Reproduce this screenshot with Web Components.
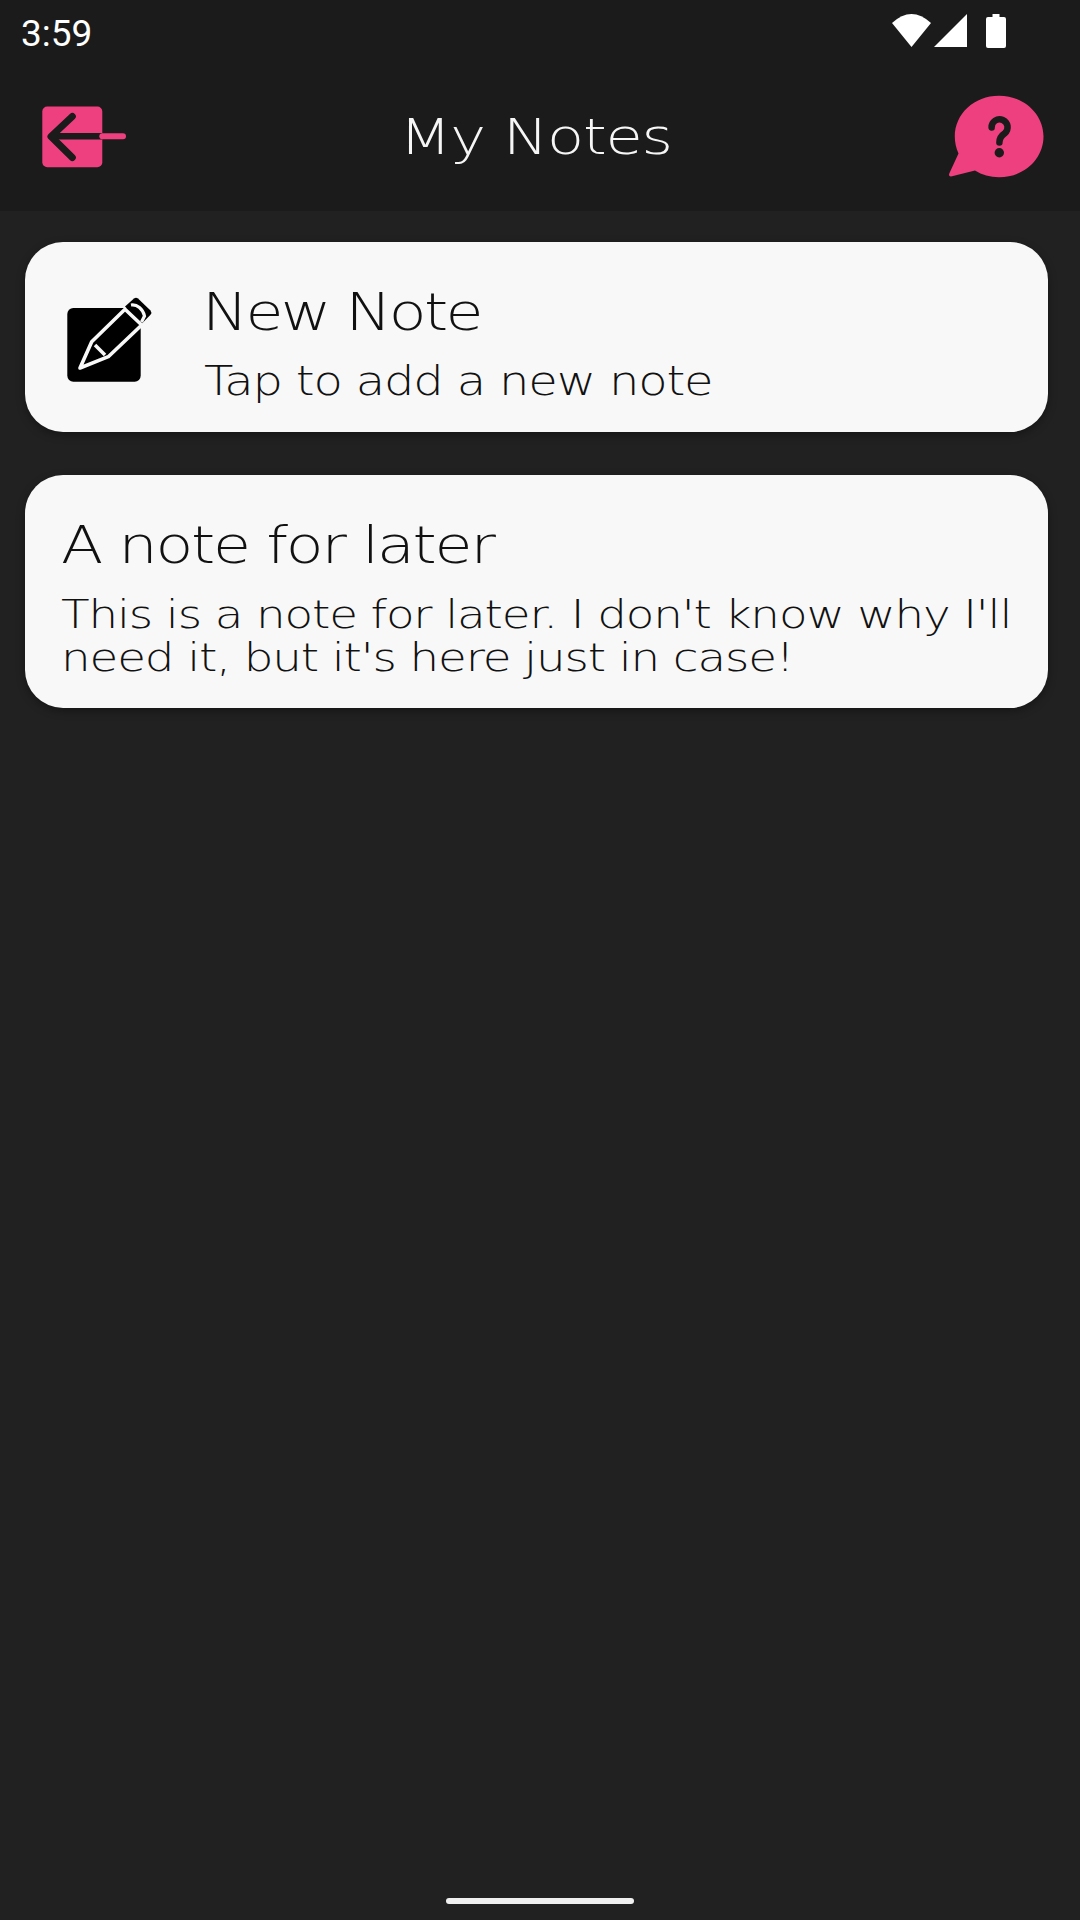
<!doctype html>
<html><head><meta charset="utf-8"><style>
html,body{margin:0;padding:0;height:1920px;background:#212121}
body{display:flex;flex-direction:column;width:1080px;overflow:hidden;font-family:"DejaVu Sans",sans-serif}
</style></head><body>
<notes-app>
  <app-header title-text="My Notes"></app-header>
  <note-list>
    <note-card heading="New Note" kind="new">
      <svg slot="icon" width="88" height="90" viewBox="66 296 88 90" aria-hidden="true">
        <rect x="67.300" y="308" width="73.400" height="73.700" rx="6" fill="#000"/>
        <path d="M125 306.500 L134 298.500 Q136 296.800 138 298.500 L150.500 310.500 Q152.300 312.700 150.500 314.800 L141.500 324Z" fill="#000"/>
        <path d="M91.700 341.700 L125 309.300 L141.700 325 L108.300 356.700 L80 368Z" fill="#000" stroke="#f8f8f8" stroke-width="3.600" stroke-linejoin="round"/>
        <path d="M95 345 L105 355" stroke="#f8f8f8" stroke-width="3.600" fill="none"/>
        <path d="M131 305 C137 304 143 309 144.500 316 L141.500 322" stroke="#f8f8f8" stroke-width="3.200" fill="none"/>
      </svg>
      <span slot="body">Tap to add a new note</span>
    </note-card>
    <note-card heading="A note for later">
      <span slot="body">This is a note for later. I don't know why I'll need it, but it's here just in case!</span>
    </note-card>
  </note-list>
  <home-indicator></home-indicator>
</notes-app>
<script>
customElements.define('notes-app',class extends HTMLElement{constructor(){super();this.attachShadow({mode:'open'}).innerHTML=`<style>:host{display:flex;flex-direction:column;height:1920px;width:1080px}</style><slot></slot>`}});
customElements.define('status-bar',class extends HTMLElement{constructor(){super();this.attachShadow({mode:'open'}).innerHTML=`<style>
:host{display:flex;justify-content:space-between;align-items:flex-start;height:63px;box-sizing:border-box;padding:12px 73px 0 21px;color:#fff}
.t{font:400 37px/44px Roboto,sans-serif}
svg{display:block;margin-top:1px}
</style><span class="t">3:59</span>
<svg width="115" height="36" viewBox="892 13 115 36" aria-hidden="true" fill="#fff">
<path d="M892 23 Q911.500 5 931 23 L911.500 47Z"/>
<path d="M934 47 L967 14 V47Z"/>
<path d="M992.500 14 H999.500 V17 H1004 Q1006 17 1006 19 V46 Q1006 48 1004 48 H988 Q986 48 986 46 V19 Q986 17 988 17 H992.500Z"/>
</svg>`}});
customElements.define('app-header',class extends HTMLElement{constructor(){super();this.attachShadow({mode:'open'}).innerHTML=`<style>
:host{display:block;background:#1b1b1b;height:211px}
.bar{display:grid;grid-template-columns:1fr auto 1fr;align-items:center;height:148px;padding:0 51px 0 42px;box-sizing:border-box}
h1{margin:0;font:200 50.500px/60px "DejaVu Sans",sans-serif;letter-spacing:-1.030px;color:#f6f6f6;white-space:nowrap;transform:scaleX(1.2)}
.r{justify-self:end;margin-right:-15px}svg{display:block}
</style><status-bar></status-bar><div class="bar">
<svg width="85" height="62" viewBox="42 105.500 85 62" aria-hidden="true">
<rect x="42.300" y="106" width="60" height="60.700" rx="5" fill="#ee3f7e"/>
<path d="M51 135.800 H102.300" stroke="#1b1b1b" stroke-width="6.500"/>
<path d="M102.300 135.800 H123" stroke="#ee3f7e" stroke-width="6" stroke-linecap="round"/>
<path d="M72.300 116 L51 136 L72.300 157" stroke="#1b1b1b" stroke-width="7" stroke-linecap="round" stroke-linejoin="round" fill="none"/>
</svg>
<h1></h1>
<svg class="r" width="96" height="84" viewBox="948 95 96 84" aria-hidden="true">
<path d="M999 95.700 C1024 95.700 1043.500 114 1043.500 136.500 C1043.500 159 1024 177.300 999 177.300 C990 177.300 982 175 975 170.500 L952 176.300 Q947.800 177 949.500 173 L958.500 153.500 C956 148 954.800 142 954.800 136.500 C954.800 114 974 95.700 999 95.700Z" fill="#ee3f7e"/>
<path d="M991.600 127.500 A8 8 0 1 1 1004.800 133.300 C1001.500 135.500 999.400 137.500 999.400 142.500" stroke="#1b1b1b" stroke-width="6.500" fill="none" stroke-linecap="round"/>
<circle cx="999.300" cy="152.700" r="4.700" fill="#1b1b1b"/>
</svg></div>`;
this.shadowRoot.querySelector('h1').textContent=this.getAttribute('title-text')}});
customElements.define('note-list',class extends HTMLElement{constructor(){super();this.attachShadow({mode:'open'}).innerHTML=`<style>:host{display:flex;flex-direction:column;gap:43px;flex:1;padding:31px 32px 0 25px}</style><slot></slot>`}});
customElements.define('note-card',class extends HTMLElement{constructor(){super();this.attachShadow({mode:'open'}).innerHTML=`<style>
:host{display:flex;align-items:center;background:#f8f8f8;border-radius:38px;box-shadow:0 3px 8px rgba(0,0,0,.35);box-sizing:border-box;padding:40px 24px 29px 36px;color:#111}
:host([kind=new]){padding-left:41px}
.i{display:none;margin-right:50px;margin-top:-4px}
:host([kind=new]) .i{display:block}
::slotted(svg){display:block}
.col{flex:1;min-width:0}
.h,.b{transform:scaleX(1.2);transform-origin:0 50%;width:calc(100% / 1.2)}
.h{font:200 51.500px/60px "DejaVu Sans",sans-serif;letter-spacing:-1.850px;white-space:nowrap}
.b{font:200 39px/43px "DejaVu Sans",sans-serif;letter-spacing:-.950px;margin-top:18px}
:host([kind=new]) .h{letter-spacing:-2.300px;margin-left:-2px}
:host([kind=new]) .b{letter-spacing:-.970px;font-size:40px}
</style><div class="i"><slot name="icon"></slot></div><div class="col"><div class="h"></div><div class="b"><slot name="body"></slot></div></div>`;
this.shadowRoot.querySelector('.h').textContent=this.getAttribute('heading')}});
customElements.define('home-indicator',class extends HTMLElement{constructor(){super();this.attachShadow({mode:'open'}).innerHTML=`<style>:host{display:flex;justify-content:center;padding-bottom:16px}div{width:188px;height:6px;border-radius:3px;background:#f0f0f0}</style><div></div>`}});
</script></body></html>
